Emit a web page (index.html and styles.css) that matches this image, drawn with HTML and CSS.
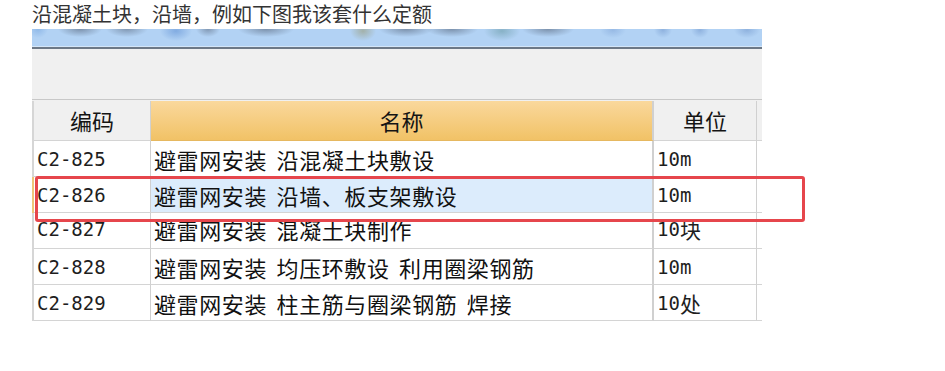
FILE: index.html
```html
<!DOCTYPE html>
<html lang="zh-CN">
<head>
<meta charset="utf-8">
<title>定额</title>
<link rel="stylesheet" href="styles.css">
</head>
<body>
<div class="title">沿混凝土块，沿墙，例如下图我该套什么定额</div>
<div class="shot">
  <div class="ribbon"></div>
  <div class="rib-light"></div>
  <div class="rib-dark"></div>
  <div class="toolbar"></div>
  <div class="grid">
    <div class="row head">
      <div class="cell c1">编码</div>
      <div class="cell c2">名称</div>
      <div class="cell c3">单位</div>
      <div class="cell c4"></div>
    </div>
    <div class="row">
      <div class="cell c1 code">C2-825</div>
      <div class="cell c2 name">避雷网安装 沿混凝土块敷设</div>
      <div class="cell c3 code">10m</div>
      <div class="cell c4"></div>
    </div>
    <div class="row sel">
      <div class="cell c1 code">C2-826</div>
      <div class="cell c2 name">避雷网安装 沿墙、板支架敷设</div>
      <div class="cell c3 code">10m</div>
      <div class="cell c4"></div>
    </div>
    <div class="row up">
      <div class="cell c1 code">C2-827</div>
      <div class="cell c2 name">避雷网安装 混凝土块制作</div>
      <div class="cell c3 code">10<span class="cjk">块</span></div>
      <div class="cell c4"></div>
    </div>
    <div class="row">
      <div class="cell c1 code">C2-828</div>
      <div class="cell c2 name">避雷网安装 均压环敷设 利用圈梁钢筋</div>
      <div class="cell c3 code">10m</div>
      <div class="cell c4"></div>
    </div>
    <div class="row">
      <div class="cell c1 code">C2-829</div>
      <div class="cell c2 name">避雷网安装 柱主筋与圈梁钢筋 焊接</div>
      <div class="cell c3 code">10<span class="cjk">处</span></div>
      <div class="cell c4"></div>
    </div>
  </div>
</div>
<div class="mark"></div>
</body>
</html>
```
FILE: styles.css
```css
html, body {
  margin: 0;
  padding: 0;
  background: #ffffff;
}
body {
  font-family: "Noto Sans CJK SC", "Noto Sans", sans-serif;
  position: relative;
}
.title {
  height: 29px;
  line-height: 28px;
  padding-left: 32px;
  font-size: 20px;
  color: #333333;
  white-space: nowrap;
}
.shot {
  margin-left: 32px;
  width: 730px;
}
.ribbon {
  height: 17px;
  background:
    radial-gradient(ellipse 10px 9px at 6px 0px, rgba(110,160,220,.5), rgba(110,160,220,0)),
    radial-gradient(ellipse 22px 8px at 48px 0px, rgba(70,82,102,.5), rgba(70,82,102,0)),
    radial-gradient(ellipse 21px 8px at 95px 0px, rgba(70,82,102,.45), rgba(70,82,102,0)),
    radial-gradient(ellipse 16px 10px at 144px 2px, rgba(90,140,210,.55), rgba(90,140,210,0)),
    radial-gradient(ellipse 12px 8px at 176px 0px, rgba(70,82,102,.45), rgba(70,82,102,0)),
    radial-gradient(ellipse 28px 8px at 234px 0px, rgba(70,82,102,.5), rgba(70,82,102,0)),
    radial-gradient(ellipse 13px 10px at 331px 2px, rgba(150,150,110,.55), rgba(150,150,110,0)),
    radial-gradient(ellipse 27px 8px at 374px 0px, rgba(70,82,102,.5), rgba(70,82,102,0)),
    radial-gradient(ellipse 26px 8px at 420px 0px, rgba(70,82,102,.5), rgba(70,82,102,0)),
    radial-gradient(ellipse 18px 10px at 470px 2px, rgba(100,150,160,.55), rgba(100,150,160,0)),
    radial-gradient(ellipse 26px 8px at 516px 0px, rgba(70,82,102,.5), rgba(70,82,102,0)),
    radial-gradient(ellipse 13px 8px at 581px 1px, rgba(100,140,200,.35), rgba(100,140,200,0)),
    radial-gradient(ellipse 9px 8px at 631px 1px, rgba(90,130,190,.4), rgba(90,130,190,0)),
    radial-gradient(ellipse 9px 8px at 668px 1px, rgba(90,130,190,.4), rgba(90,130,190,0)),
    radial-gradient(ellipse 13px 8px at 715px 1px, rgba(90,130,190,.4), rgba(90,130,190,0)),
    #b2d2f4;
}
.rib-light {
  height: 1px;
  background: #d4e6f8;
}
.rib-dark {
  height: 2px;
  background: #6c7886;
}
.toolbar {
  height: 50px;
  background: #f0f0f0;
  border-bottom: 1px solid #c8c8c8;
}
.grid {
  padding-top: 1px;
  background: linear-gradient(#f0f0f0, #f0f0f0) no-repeat 0 0 / 100% 41px;
}
.row {
  display: grid;
  grid-template-columns: 117px 503px 103px 5px;
  height: 36px;
  border-left: 2px solid #d6d6d6;
  background: #ffffff;
}
.row.head {
  height: 40px;
  background: #f0f0f0;
}
.row.sel {
  border-left-color: #eec67a;
}
.cell {
  box-sizing: border-box;
  border-bottom: 1px solid #d4d4d4;
  display: flex;
  align-items: center;
  white-space: nowrap;
  overflow: hidden;
  color: #111111;
}
.c1 { border-right: 1px solid #d0d0d0; }
.c2 { border-right: 2px solid #d0d0d0; }
.c3 { border-right: 1px solid #d0d0d0; }
.head .cell {
  justify-content: center;
  font-size: 22px;
  color: #141414;
  padding-bottom: 2px;
}
.head .c2 {
  background: linear-gradient(#fad89c, #f1c266);
  border-bottom-color: #e6b860;
}
.head .c4 {
  border-bottom-color: #d4d4d4;
}
.code {
  font-family: "DejaVu Sans Mono", "Liberation Mono", monospace;
  font-size: 19px;
  padding-left: 3px;
  color: #1e1e1e;
}
.code .cjk {
  font-family: "Noto Sans CJK SC", sans-serif;
  font-size: 21px;
}
.name {
  font-size: 22px;
  letter-spacing: 0.6px;
  word-spacing: 4px;
  padding-left: 3px;
}
.sel .c2 {
  background: #dcecfc;
}
.up .cell {
  align-items: flex-start;
  padding-top: 1px;
  line-height: 30px;
}
.up .code { padding-top: 1px; }
.mark {
  position: absolute;
  left: 35px;
  top: 176px;
  width: 770px;
  height: 46px;
  box-sizing: border-box;
  border: 3px solid #e6464c;
  border-radius: 3px;
}
```
